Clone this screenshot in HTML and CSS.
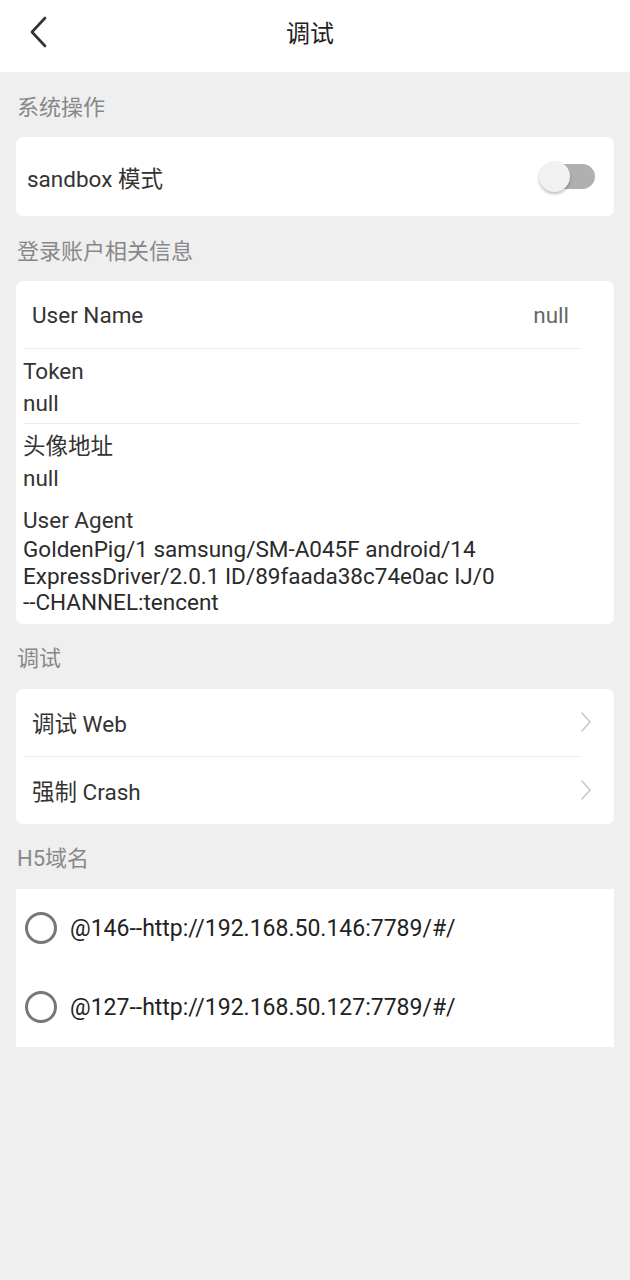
FILE: index.html
```html
<!DOCTYPE html>
<html>
<head>
  <title>调试</title>
  <link rel="stylesheet" href="styles.css">
</head>
<body>
  <header class="topbar">
    <button class="back-btn" aria-label="返回">
      <svg width="20" height="32" viewBox="0 0 20 32"><path d="M16 2 L3 16 L16 30" fill="none" stroke="#333" stroke-width="2.6" stroke-linecap="round" stroke-linejoin="round"/></svg>
    </button>
    <h1 class="title">调试</h1>
    <span></span>
  </header>

  <div class="section-title">系统操作</div>
  <div class="card">
    <div class="row row-switch">
      <span>sandbox 模式</span>
      <span class="switch"><span class="switch-thumb"></span></span>
    </div>
  </div>

  <div class="section-title">登录账户相关信息</div>
  <div class="card">
    <div class="row row-kv">
      <span>User Name</span>
      <span class="kv-value">null</span>
    </div>
    <div class="divider"></div>
    <div class="info">
      <div class="info-label">Token</div>
      <div class="info-value">null</div>
    </div>
    <div class="divider"></div>
    <div class="info">
      <div class="info-label">头像地址</div>
      <div class="info-value">null</div>
    </div>
    <div class="info info-last">
      <div class="info-label">User Agent</div>
      <div class="info-value ua">GoldenPig/1 samsung/SM-A045F android/14<br>ExpressDriver/2.0.1 ID/89faada38c74e0ac IJ/0<br>--CHANNEL:tencent</div>
    </div>
  </div>

  <div class="section-title">调试</div>
  <div class="card">
    <div class="row row-link">
      <span>调试 Web</span>
      <svg class="arrow" width="12" height="22" viewBox="0 0 12 22"><path d="M2 2 L10 11 L2 20" fill="none" stroke="#c8c8c8" stroke-width="1.6" stroke-linecap="round" stroke-linejoin="round"/></svg>
    </div>
    <div class="divider"></div>
    <div class="row row-link">
      <span>强制 Crash</span>
      <svg class="arrow" width="12" height="22" viewBox="0 0 12 22"><path d="M2 2 L10 11 L2 20" fill="none" stroke="#c8c8c8" stroke-width="1.6" stroke-linecap="round" stroke-linejoin="round"/></svg>
    </div>
  </div>

  <div class="section-title">H5域名</div>
  <div class="card card-flat">
    <label class="radio-row">
      <span class="radio"></span>
      <span>@146--http://192.168.50.146:7789/#/</span>
    </label>
    <label class="radio-row">
      <span class="radio"></span>
      <span>@127--http://192.168.50.127:7789/#/</span>
    </label>
  </div>
</body>
</html>
```

FILE: styles.css
```css
body {
  margin: 0;
  min-height: 1280px;
  background-color: #efefef;
  font-family: Roboto, "Noto Sans CJK SC", sans-serif;
  font-size: 22.5px;
  color: #333;
}

.topbar {
  height: 72px;
  background-color: white;
  display: grid;
  grid-template-columns: 80px 1fr 90px;
  align-items: center;
}

.back-btn {
  border: none;
  background: none;
  padding: 0 0 0 29px;
  height: 72px;
  display: flex;
  align-items: center;
  margin-top: -8px;
}

.title {
  margin: -9px 0 0;
  text-align: center;
  font-size: 24px;
  font-weight: normal;
  color: #222;
}

.section-title {
  height: 65px;
  display: flex;
  align-items: center;
  padding-left: 17px;
  color: #888;
  font-size: 22px;
}

.card {
  margin: 0 16px;
  background-color: white;
  border-radius: 7px;
}

.card-flat {
  border-radius: 0;
}

.row {
  display: flex;
  align-items: center;
  justify-content: space-between;
}

.row-switch {
  height: 79px;
  padding: 0 19px 0 11px;
}

.switch {
  position: relative;
  width: 50px;
  height: 25px;
  border-radius: 13px;
  background-color: #b0b0b0;
}

.switch-thumb {
  position: absolute;
  left: -6px;
  top: -3px;
  width: 31px;
  height: 31px;
  border-radius: 50%;
  background-color: #f1f1f1;
  box-shadow: 0 2px 3px rgba(0, 0, 0, 0.25);
}

.row-kv {
  height: 67px;
  padding: 0 45px 0 16px;
}

.kv-value {
  color: #666;
}

.divider {
  height: 1px;
  margin: 0 34px 0 8px;
  background-color: #ececec;
}

.info {
  padding: 6px 7px 4px;
}

.info-last {
  padding-bottom: 8px;
}

.info-label,
.info-value {
  line-height: 32px;
}

.info-value.ua {
  line-height: 26.5px;
  color: #2a2a2a;
}

.row-link {
  height: 67px;
  padding: 0 22px 0 16px;
}

.radio-row {
  height: 79px;
  display: flex;
  align-items: center;
  gap: 13px;
  padding-left: 9px;
  color: #222;
  font-size: 23px;
}

.radio {
  width: 26px;
  height: 26px;
  border: 3px solid #777;
  border-radius: 50%;
}
```
